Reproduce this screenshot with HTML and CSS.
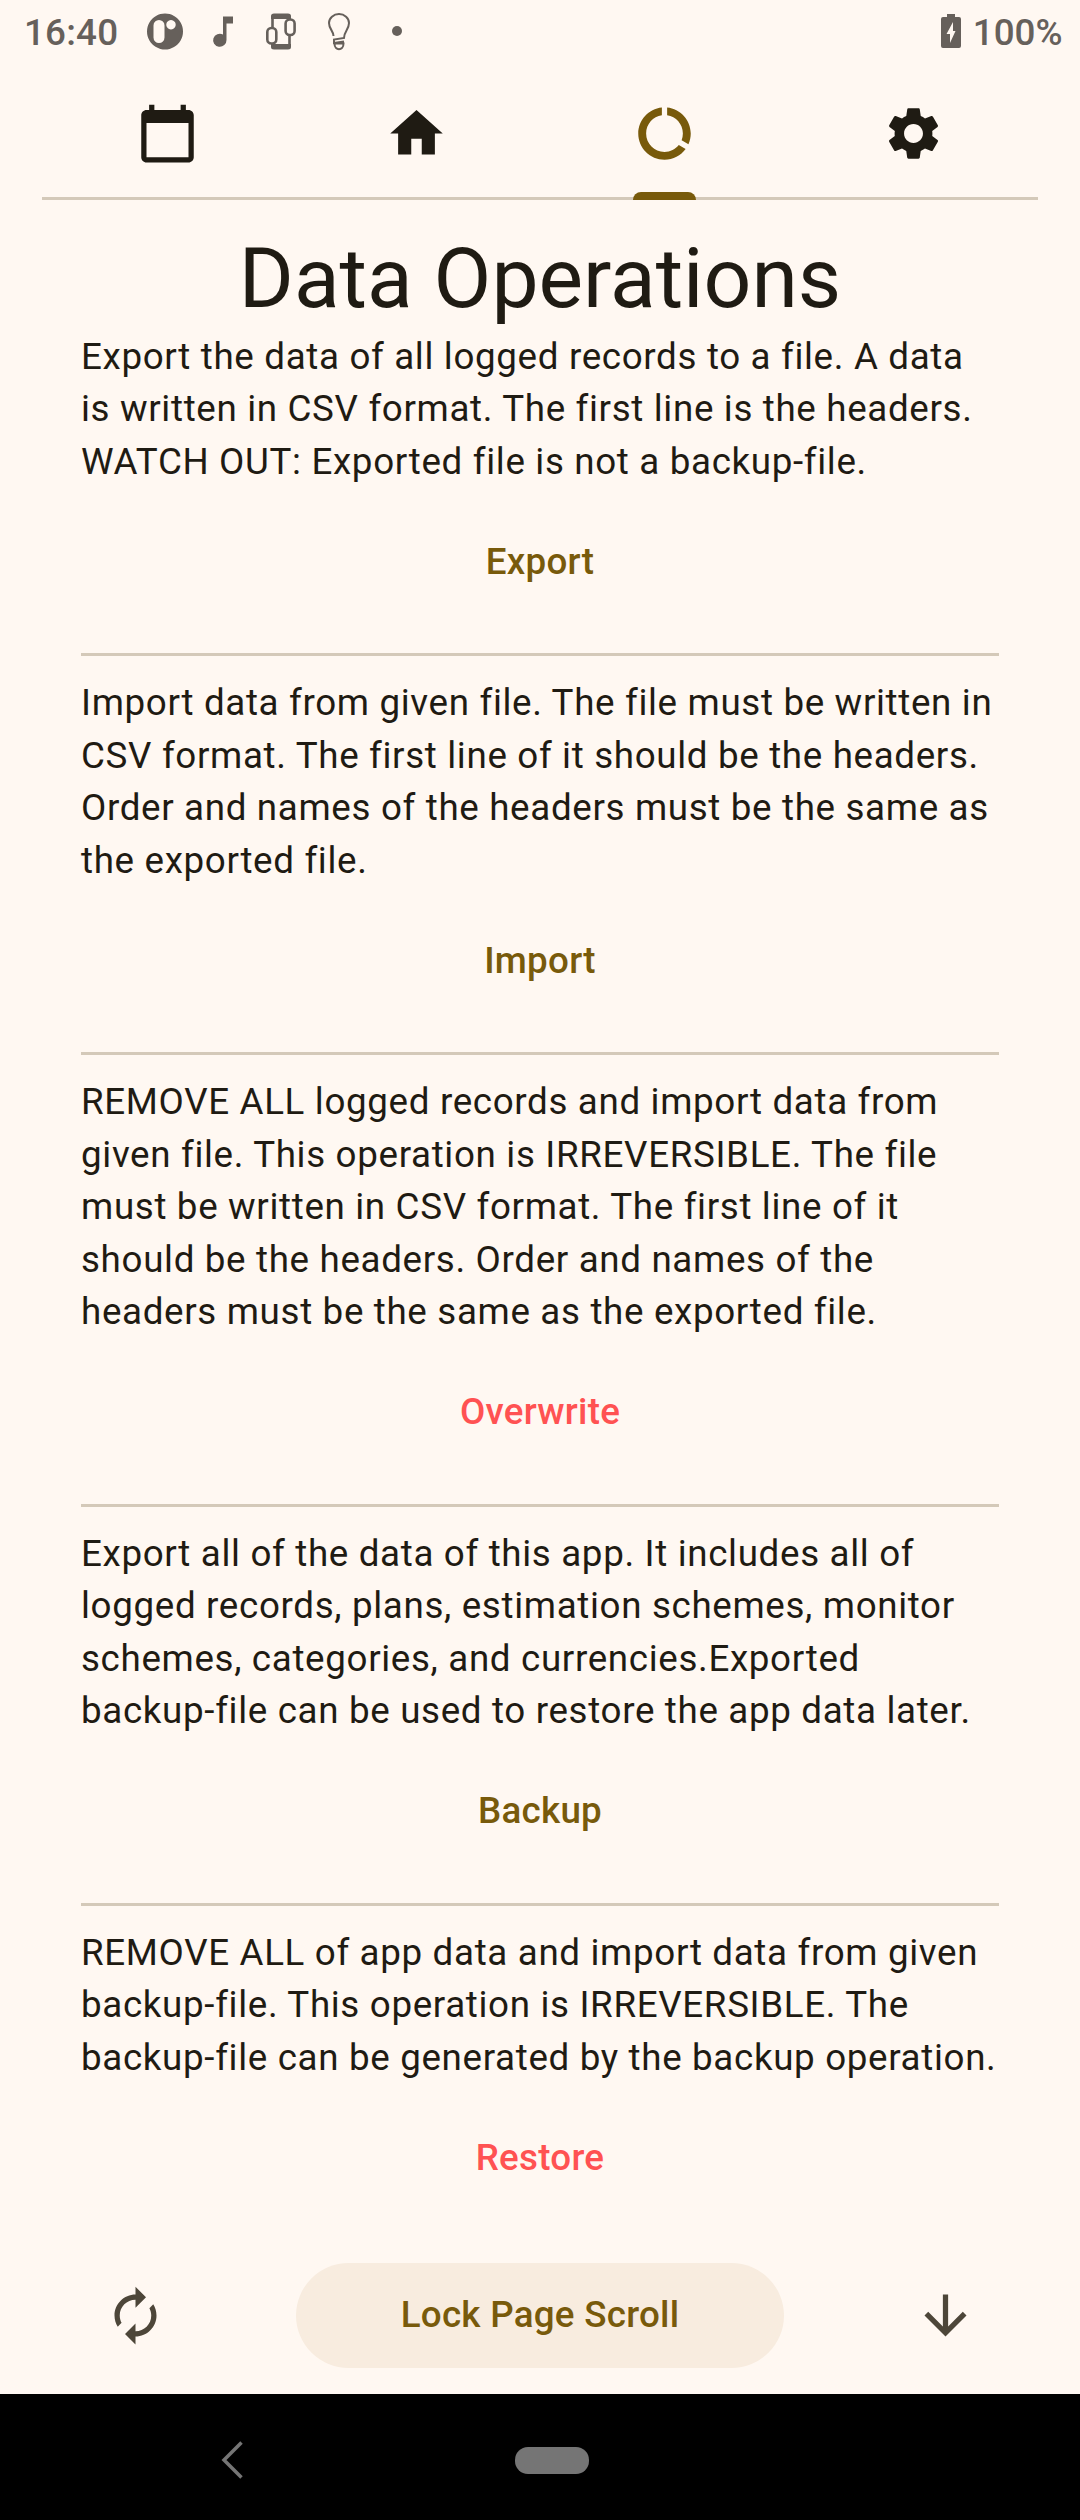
FILE: index.html
```html
<!DOCTYPE html>
<html lang="en">
<head>
<meta charset="utf-8">
<title>Data Operations</title>
<link rel="stylesheet" href="styles.css">
</head>
<body>
<div class="screen">
  <header class="status">
    <span class="clock">16:40</span>
    <svg class="status-icons" width="290" height="66" viewBox="130 0 290 66">
      <path fill-rule="evenodd" d="M165 13.500a18 18 0 1 0 .01 0zM159 20a5.500 5.500 0 0 1 5.500 5.500v12a5.500 5.500 0 0 1-11 0v-12A5.500 5.500 0 0 1 159 20zM171 20a4.700 4.700 0 1 1-.01 0z"/>
      <path d="M223 16.500h10v7h-6.500V40a6.700 6.500 0 1 1-3.500-5.500z"/>
      <path d="M271 16q0-2.500 3-2.500h14q3 0 3 2.500v3h-20zM271 44h20v3q0 2.500-3 2.500h-14q-3 0-3-2.500z"/>
      <path class="line" d="M272.500 28V18M272.500 43v3M289.500 34v12M289.500 20v-2"/>
      <rect class="line" x="267.300" y="28" width="9" height="15.500" rx="4"/>
      <rect class="line" x="285.600" y="19.500" width="9" height="15.500" rx="4"/>
      <path class="thin" d="M333.500 36c0-5-4.500-7-4.500-13a10 9 0 0 1 20 0c0 6.500-5 8.500-5 15l-10 1.500v3.500l10-1.500M334.500 43.500c0 7.500 9 7.500 9 0z"/>
      <circle cx="397" cy="31" r="5"/>
    </svg>
    <div class="power">
      <svg width="20" height="34" viewBox="0 0 20 34"><path fill-rule="evenodd" d="M6 0h8v3h4q2 0 2 2v27q0 2-2 2H2q-2 0-2-2V5q0-2 2-2h4zM12 8l-6.500 12h3.500v9l5.500-12H12z"/></svg>
      <span>100%</span>
    </div>
  </header>

  <nav class="tabs">
    <a class="tab"><svg class="icon" viewBox="0 0 24 24"><path d="M20 3h-1V1h-2v2H7V1H5v2H4c-1.100 0-2 .9-2 2v16c0 1.100.9 2 2 2h16c1.100 0 2-.9 2-2V5c0-1.100-.9-2-2-2zm0 18H4V8h16v13z"/></svg></a>
    <a class="tab"><svg class="icon" viewBox="0 0 24 24"><path d="M10 20v-6h4v6h5v-8h3L12 3 2 12h3v8z"/></svg></a>
    <a class="tab active"><svg class="icon" viewBox="0 0 24 24"><path d="M13 2.050v3.030c3.390.49 6 3.390 6 6.920 0 .9-.18 1.750-.48 2.540l2.600 1.530c.56-1.240.88-2.620.88-4.070 0-5.180-3.950-9.450-9-9.950zM12 19c-3.870 0-7-3.130-7-7 0-3.530 2.610-6.430 6-6.920V2.050c-5.060.5-9 4.760-9 9.950 0 5.520 4.470 10 9.990 10 3.310 0 6.240-1.610 8.060-4.090l-2.600-1.530C16.170 17.980 14.210 19 12 19z"/></svg></a>
    <a class="tab"><svg class="icon" viewBox="0 0 24 24"><path d="M19.140,12.940c0.040-0.300,0.060-0.610,0.060-0.940c0-0.320-0.020-0.640-0.070-0.940l2.030-1.580c0.180-0.140,0.230-0.410,0.120-0.610l-1.920-3.320c-0.120-0.220-0.370-0.290-0.590-0.220l-2.390,0.960c-0.500-0.380-1.030-0.700-1.620-0.940L14.400,2.810c-0.040-0.240-0.240-0.410-0.480-0.410h-3.840c-0.240,0-0.430,0.170-0.470,0.410L9.250,5.350C8.660,5.590,8.120,5.920,7.630,6.290L5.240,5.330c-0.220-0.080-0.470,0-0.590,0.220L2.740,8.870C2.620,9.080,2.660,9.340,2.860,9.480l2.030,1.580C4.840,11.360,4.800,11.690,4.800,12s0.020,0.640,0.070,0.940l-2.030,1.580c-0.180,0.140-0.230,0.410-0.120,0.610l1.920,3.320c0.120,0.220,0.370,0.290,0.590,0.220l2.390-0.960c0.500,0.380,1.030,0.700,1.620,0.940l0.360,2.540c0.050,0.240,0.240,0.410,0.480,0.410h3.840c0.240,0,0.440-0.170,0.470-0.410l0.360-2.540c0.590-0.240,1.130-0.560,1.620-0.940l2.390,0.960c0.220,0.080,0.470,0,0.590-0.220l1.920-3.320c0.120-0.220,0.070-0.470-0.120-0.610L19.140,12.940zM12,15.600c-1.980,0-3.600-1.620-3.600-3.600s1.620-3.600,3.600-3.600s3.600,1.620,3.600,3.600S13.980,15.600,12,15.600z"/></svg></a>
  </nav>

  <main class="content">
    <h1>Data Operations</h1>
    <section>
      <p>Export the data of all logged records to a file. A data<br>is written in CSV format. The first line is the headers.<br>WATCH OUT: Exported file is not a backup-file.</p>
      <button>Export</button>
    </section>
    <section>
      <p>Import data from given file. The file must be written in<br>CSV format. The first line of it should be the headers.<br>Order and names of the headers must be the same as<br>the exported file.</p>
      <button>Import</button>
    </section>
    <section>
      <p>REMOVE ALL logged records and import data from<br>given file. This operation is IRREVERSIBLE. The file<br>must be written in CSV format. The first line of it<br>should be the headers. Order and names of the<br>headers must be the same as the exported file.</p>
      <button class="danger">Overwrite</button>
    </section>
    <section>
      <p>Export all of the data of this app. It includes all of<br>logged records, plans, estimation schemes, monitor<br>schemes, categories, and currencies.Exported<br>backup-file can be used to restore the app data later.</p>
      <button>Backup</button>
    </section>
    <section>
      <p>REMOVE ALL of app data and import data from given<br>backup-file. This operation is IRREVERSIBLE. The<br>backup-file can be generated by the backup operation.</p>
      <button class="danger">Restore</button>
    </section>
  </main>

  <footer class="actions">
    <svg class="icon" viewBox="0 0 24 24"><path d="M12 6v3l4-4-4-4v3c-4.420 0-8 3.580-8 8 0 1.570.46 3.030 1.240 4.260L6.700 14.800c-.45-.83-.7-1.790-.7-2.800 0-3.310 2.690-6 6-6zm6.760 1.740L17.300 9.200c.44.84.7 1.790.7 2.800 0 3.310-2.690 6-6 6v-3l-4 4 4 4v-3c4.420 0 8-3.580 8-8 0-1.570-.46-3.030-1.240-4.260z"/></svg>
    <button class="lock">Lock Page Scroll</button>
    <svg class="icon" viewBox="0 0 24 24"><path d="M20 12l-1.410-1.410L13 16.170V4h-2v12.170l-5.580-5.590L4 12l8 8 8-8z"/></svg>
  </footer>

  <div class="system-nav">
    <svg width="24" height="38" viewBox="0 0 24 38"><path d="M21.500 1.500L4 19l17.500 17.500" fill="none" stroke="#757575" stroke-width="3.500"/></svg>
    <span class="home"></span>
  </div>
</div>
</body>
</html>
```
FILE: styles.css
```css
* { box-sizing: border-box; }

body {
  margin: 0;
  background: #fff8f2;
  color: #1f1b13;
  font-family: Roboto, sans-serif;
  font-size: 36.75px;
  line-height: 52.5px;
}

.screen {
  display: flex;
  flex-direction: column;
  width: 1080px;
  height: 2520px;
  overflow: hidden;
}

svg { display: block; flex: none; fill: currentColor; }
.icon { width: 63px; height: 63px; }

.status {
  display: flex;
  align-items: center;
  flex: none;
  height: 66px;
  padding: 0 17.5px 0 24px;
  color: #66605b;
  font-weight: 500;
}
.clock { width: 106px; padding-top: 1px; letter-spacing: 0.2px; white-space: nowrap; }
.status-icons .line { fill: none; stroke: currentColor; stroke-width: 2.6; }
.status-icons .thin { fill: none; stroke: currentColor; stroke-width: 2; }
.power { display: flex; align-items: center; gap: 12px; margin-left: auto; }
.power svg { margin-top: -4px; }
.power span { padding-top: 1px; }

.tabs {
  display: flex;
  height: 133.5px;
  margin: 0 42px;
  padding-left: 1px;
  border-bottom: 3px solid #d4c9b9;
  flex: none;
}
.tab {
  position: relative;
  flex: 1;
  display: flex;
  justify-content: center;
  padding-top: 36px;
}
.active { color: #785a0b; }
.active::after {
  content: "";
  position: absolute;
  bottom: -3px;
  width: 63px;
  height: 8px;
  border-radius: 8px 8px 0 0;
  background: currentColor;
}

.content { flex: 1 1 0; min-height: 0; padding: 26.4px 81px 0; }
h1 {
  margin: 0;
  font-size: 84px;
  line-height: 105px;
  font-weight: 400;
  text-align: center;
}
section {
  display: flex;
  flex-direction: column;
  align-items: center;
}
section + section {
  border-top: 3px solid #d4c9b9;
  padding-top: 21.225px;
}
p {
  align-self: stretch;
  margin: 0 0 21px;
  letter-spacing: 0.656px;
  white-space: nowrap;
}
button {
  height: 105px;
  margin: 0 0 38.775px;
  padding: 0 63px;
  border: 0;
  border-radius: 52.5px;
  background: none;
  color: #785a0b;
  font: inherit;
  font-weight: 500;
  letter-spacing: 0.2625px;
}
.danger { color: #ff5252; }

.actions {
  display: flex;
  align-items: center;
  justify-content: space-between;
  height: 157.5px;
  padding: 0 103.5px;
  color: #4d4639;
  flex: none;
}
.lock {
  width: 488px;
  margin: 0;
  background: #f8ecdf;
}

.system-nav {
  display: flex;
  align-items: center;
  height: 126px;
  padding: 6px 0 0 220px;
  gap: 271px;
  background: #000;
  flex: none;
}
.home {
  width: 74px;
  height: 27px;
  border-radius: 13px;
  background: #757575;
}
```
